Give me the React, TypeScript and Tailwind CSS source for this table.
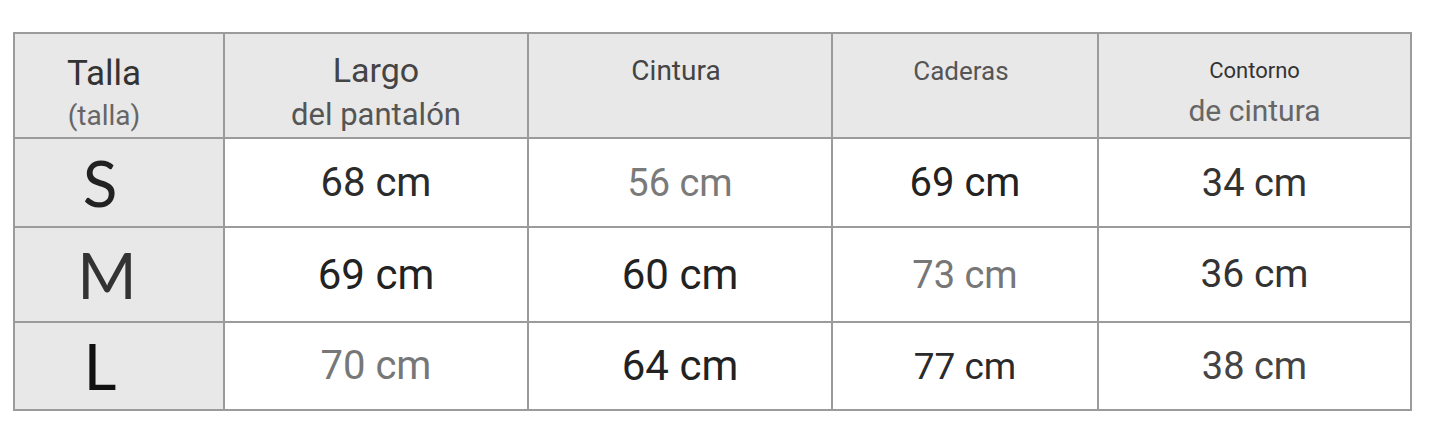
import React from 'react';

type Cell = { text: string; size: string; color: string };

const rows: { size: string; sizeColor: string; h: string; pad: string; cells: Cell[] }[] = [
  {
    size: 'S',
    sizeColor: 'text-[#222]',
    h: 'h-[87px]',
    pad: 'pr-[38px]',
    cells: [
      { text: '68 cm', size: 'text-[40px]', color: 'text-[#2b2b2b]' },
      { text: '56 cm', size: 'text-[38px]', color: 'text-[#7a7a7a]' },
      { text: '69 cm', size: 'text-[40px]', color: 'text-[#222]' },
      { text: '34 cm', size: 'text-[38px]', color: 'text-[#333]' },
    ],
  },
  {
    size: 'M',
    sizeColor: 'text-[#333]',
    h: 'h-[93px]',
    pad: 'pr-[24px]',
    cells: [
      { text: '69 cm', size: 'text-[42px]', color: 'text-[#222]' },
      { text: '60 cm', size: 'text-[42px]', color: 'text-[#222]' },
      { text: '73 cm', size: 'text-[38px]', color: 'text-[#777]' },
      { text: '36 cm', size: 'text-[39px]', color: 'text-[#333]' },
    ],
  },
  {
    size: 'L',
    sizeColor: 'text-[#111]',
    h: 'h-[86px]',
    pad: 'pr-[38px]',
    cells: [
      { text: '70 cm', size: 'text-[40px]', color: 'text-[#777]' },
      { text: '64 cm', size: 'text-[42px]', color: 'text-[#222]' },
      { text: '77 cm', size: 'text-[37px]', color: 'text-[#2a2a2a]' },
      { text: '38 cm', size: 'text-[38px]', color: 'text-[#444]' },
    ],
  },
];

const App: React.FC = () => {
  return (
    <div className="bg-white w-[1454px] h-[436px] pl-[13px] pt-[32px] font-['Roboto',sans-serif]">
      <div className="grid grid-cols-[208px_302px_302px_264px_311px] gap-[2px] p-[2px] bg-[#9b9b9b] w-fit">
        {/* header */}
        <div className="h-[103px] bg-[#e8e8e8] flex flex-col items-center pr-[30px] pt-[22px]">
          <span className="text-[35px] leading-none text-[#333]">Talla</span>
          <span className="text-[28px] leading-none text-[#666] mt-[11px]">(talla)</span>
        </div>
        <div className="h-[103px] bg-[#e8e8e8] flex flex-col items-center pt-[19px]">
          <span className="text-[34px] leading-none text-[#444]">Largo</span>
          <span className="text-[31px] leading-none text-[#555] mt-[12px]">del pantalón</span>
        </div>
        <div className="h-[103px] bg-[#e8e8e8] flex flex-col items-center pt-[23px] pr-[8px]">
          <span className="text-[28px] leading-none text-[#444]">Cintura</span>
        </div>
        <div className="h-[103px] bg-[#e8e8e8] flex flex-col items-center pt-[24px] pr-[8px]">
          <span className="text-[26px] leading-none text-[#555]">Caderas</span>
        </div>
        <div className="h-[103px] bg-[#e8e8e8] flex flex-col items-center pt-[26px]">
          <span className="text-[22px] leading-none text-[#333]">Contorno</span>
          <span className="text-[30px] leading-none text-[#666] mt-[14px]">de cintura</span>
        </div>

        {rows.map((row) => (
          <React.Fragment key={row.size}>
            <div className={`${row.h} bg-[#e8e8e8] flex items-center justify-center ${row.pad}`}>
              <span className={`font-['Lato',sans-serif] text-[64px] leading-none ${row.sizeColor}`}>
                {row.size}
              </span>
            </div>
            {row.cells.map((c, i) => (
              <div key={i} className={`${row.h} bg-white flex items-center justify-center`}>
                <span className={`${c.size} ${c.color} leading-none`}>{c.text}</span>
              </div>
            ))}
          </React.Fragment>
        ))}
      </div>
    </div>
  );
};

export default App;
